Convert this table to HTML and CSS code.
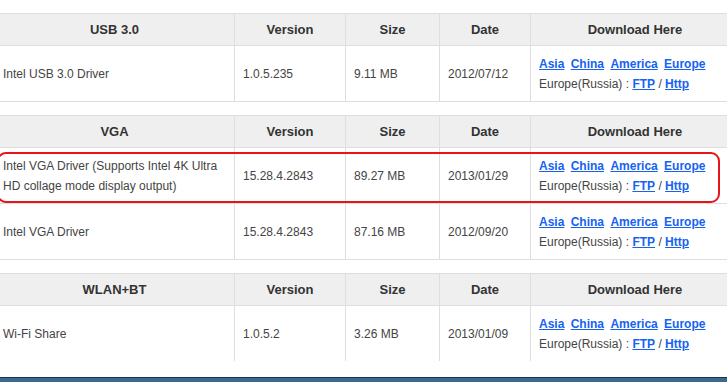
FILE: index.html
```html
<!DOCTYPE html>
<html>
<head>
<meta charset="utf-8">
<link rel="stylesheet" href="styles.css">
</head>
<body>
<div class="page">
  <table class="dl">
    <colgroup><col class="c1"><col class="c2"><col class="c3"><col class="c4"><col class="c5"></colgroup>
    <tr class="head"><th>USB 3.0</th><th>Version</th><th>Size</th><th>Date</th><th>Download Here</th></tr>
    <tr class="row">
      <td>Intel USB 3.0 Driver</td><td>1.0.5.235</td><td>9.11 MB</td><td>2012/07/12</td>
      <td class="links"><div class="mirrors"><a href="#">Asia</a> <a href="#">China</a> <a href="#">America</a> <a href="#">Europe</a></div><div>Europe(Russia) : <a href="#">FTP</a> / <a href="#">Http</a></div></td>
    </tr>
  </table>

  <div class="marked">
    <table class="dl">
      <colgroup><col class="c1"><col class="c2"><col class="c3"><col class="c4"><col class="c5"></colgroup>
      <tr class="head"><th>VGA</th><th>Version</th><th>Size</th><th>Date</th><th>Download Here</th></tr>
      <tr class="row">
        <td>Intel VGA Driver (Supports Intel 4K Ultra HD collage mode display output)</td><td>15.28.4.2843</td><td>89.27 MB</td><td>2013/01/29</td>
        <td class="links"><div class="mirrors"><a href="#">Asia</a> <a href="#">China</a> <a href="#">America</a> <a href="#">Europe</a></div><div>Europe(Russia) : <a href="#">FTP</a> / <a href="#">Http</a></div></td>
      </tr>
      <tr class="row">
        <td>Intel VGA Driver</td><td>15.28.4.2843</td><td>87.16 MB</td><td>2012/09/20</td>
        <td class="links"><div class="mirrors"><a href="#">Asia</a> <a href="#">China</a> <a href="#">America</a> <a href="#">Europe</a></div><div>Europe(Russia) : <a href="#">FTP</a> / <a href="#">Http</a></div></td>
      </tr>
    </table>
    <div class="highlight"></div>
  </div>

  <table class="dl last">
    <colgroup><col class="c1"><col class="c2"><col class="c3"><col class="c4"><col class="c5"></colgroup>
    <tr class="head"><th>WLAN+BT</th><th>Version</th><th>Size</th><th>Date</th><th>Download Here</th></tr>
    <tr class="row">
      <td>Wi-Fi Share</td><td>1.0.5.2</td><td>3.26 MB</td><td>2013/01/09</td>
      <td class="links"><div class="mirrors"><a href="#">Asia</a> <a href="#">China</a> <a href="#">America</a> <a href="#">Europe</a></div><div>Europe(Russia) : <a href="#">FTP</a> / <a href="#">Http</a></div></td>
    </tr>
  </table>
</div>
<div class="taskbar"></div>
</body>
</html>
```

FILE: styles.css
```css
html, body {
  margin: 0;
  padding: 0;
  background: #fff;
  overflow: hidden;
}
body {
  width: 727px;
  height: 382px;
  display: flex;
  flex-direction: column;
  font-family: "Liberation Sans", Arial, sans-serif;
}
.page {
  flex: 1;
  padding-top: 13px;
  overflow: hidden;
}
.dl {
  border-collapse: collapse;
  table-layout: fixed;
  width: 745px;
  margin-left: -6px;
  margin-bottom: 13px;
}
.c1 { width: 240px; }
.c2 { width: 111px; }
.c3 { width: 94px; }
.c4 { width: 91px; }
.c5 { width: 209px; }
.dl th, .dl td {
  border: 1px solid #dedede;
  padding: 0 8px;
  vertical-align: middle;
  text-align: left;
}
.head th {
  background: #efefef;
  height: 31px;
  font-size: 13px;
  font-weight: bold;
  color: #333;
  text-align: center;
}
.row td {
  height: 55px;
  font-size: 12px;
  color: #444;
  line-height: 20px;
}
.links {
  line-height: 19px;
}
.links a {
  color: #1662f2;
  font-weight: bold;
  text-decoration: underline;
}
.mirrors a {
  margin-right: 3px;
}
.last .row td {
  border-bottom: none;
}
.marked {
  position: relative;
}
.highlight {
  position: absolute;
  left: -3px;
  top: 37px;
  width: 719px;
  height: 47px;
  border: 2px solid #e8141a;
  border-radius: 9px;
  pointer-events: none;
}
.taskbar {
  height: 4px;
  border-top: 1px solid #17324a;
  background: #3a6a8e;
}
```
